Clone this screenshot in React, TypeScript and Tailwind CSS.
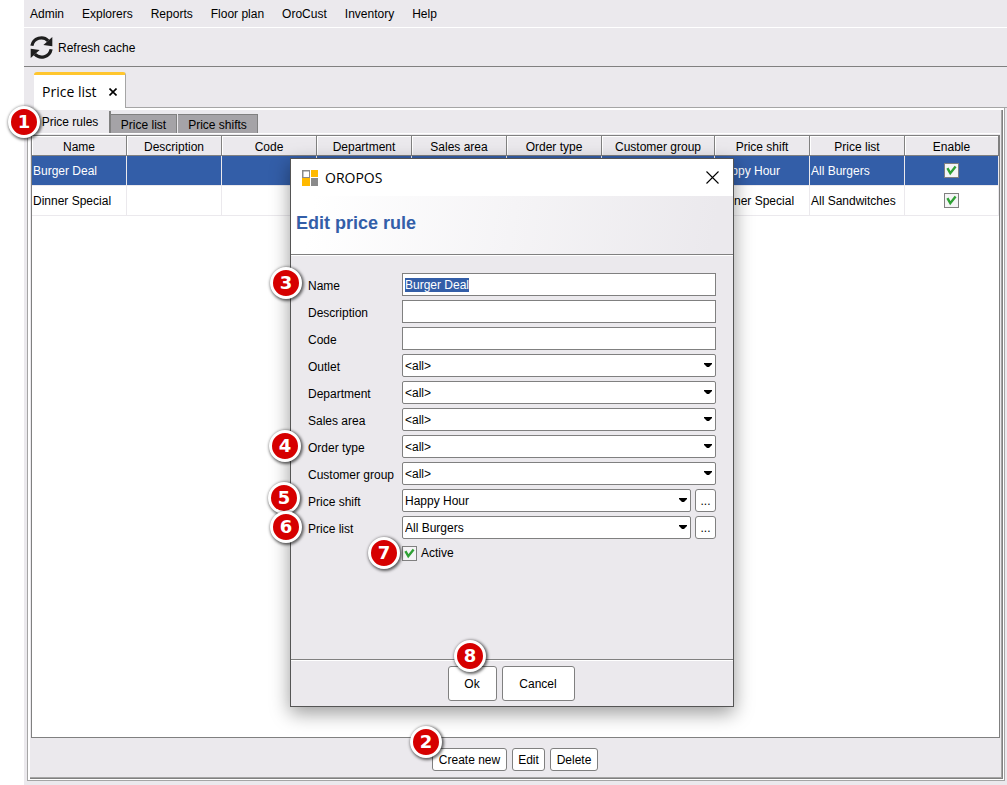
import React from 'react'
import clsx from 'clsx'

const menuItems = ['Admin', 'Explorers', 'Reports', 'Floor plan', 'OroCust', 'Inventory', 'Help']

const columns = [
  { title: 'Name', width: 'w-[95px]' },
  { title: 'Description', width: 'w-[95px]' },
  { title: 'Code', width: 'w-[95px]' },
  { title: 'Department', width: 'w-[95px]' },
  { title: 'Sales area', width: 'w-[95px]' },
  { title: 'Order type', width: 'w-[95px]' },
  { title: 'Customer group', width: 'w-[113px]' },
  { title: 'Price shift', width: 'w-[95px]' },
  { title: 'Price list', width: 'w-[95px]' },
  { title: 'Enable', width: '' },
]

const rules = [
  { name: 'Burger Deal', shift: 'Happy Hour', list: 'All Burgers', selected: true },
  { name: 'Dinner Special', shift: 'Dinner Special', list: 'All Sandwitches', selected: false },
]

const callouts = [
  { n: 1, place: 'left-[8px] top-[106px]' },
  { n: 2, place: 'left-[410px] top-[726px]' },
  { n: 3, place: 'left-[270px] top-[267px]' },
  { n: 4, place: 'left-[269px] top-[430px]' },
  { n: 5, place: 'left-[268px] top-[482px]' },
  { n: 6, place: 'left-[270px] top-[511px]' },
  { n: 7, place: 'left-[368px] top-[537px]' },
  { n: 8, place: 'left-[454px] top-[640px]' },
]

const RefreshIcon = () => (
  <svg width="23" height="23" viewBox="0 0 23 23" fill="none" aria-hidden="true">
    <path d="M1.9 9.8A9.6 9.6 0 0 1 18.2 4.8" stroke="#1e1e1e" strokeWidth="3.2" />
    <path d="M22.3 1V10.2L13.4 9Z" fill="#1e1e1e" />
    <path d="M21.1 13.2A9.6 9.6 0 0 1 4.8 18.2" stroke="#1e1e1e" strokeWidth="3.2" />
    <path d="M.7 22V12.8L9.6 14Z" fill="#1e1e1e" />
  </svg>
)

const LogoIcon = () => (
  <svg width="16" height="16" viewBox="0 0 16 16" aria-hidden="true">
    <rect x="0" y="0" width="8" height="8" fill="#8a8a8a" />
    <rect x="1.5" y="1.5" width="5.5" height="5.5" fill="#fff" />
    <rect x="9" y="0" width="7" height="7" fill="#ffb900" />
    <rect x="0" y="8" width="8" height="8" fill="#ffb900" />
    <rect x="9" y="8" width="7" height="8" fill="#8a8a8a" />
  </svg>
)

const CheckBox = ({ id, label }: { id?: string, label?: string }) => (
  <span className="relative mx-auto block h-[15px] w-[15px] shrink-0">
    <input
      id={id}
      type="checkbox"
      defaultChecked
      aria-label={label}
      className="peer block h-[15px] w-[15px] appearance-none border border-[#808080] bg-[#f5f4f6]"
    />
    <svg
      className="pointer-events-none absolute inset-0 hidden peer-checked:block"
      width="15"
      height="15"
      viewBox="0 0 15 15"
      fill="none"
      aria-hidden="true"
    >
      <path d="M3.4 5.2L6.3 10.2L11.6 3.6" stroke="#2fa135" strokeWidth="2.4" />
    </svg>
  </span>
)

const Button = ({ children, className }: { children: React.ReactNode, className: string }) => (
  <button
    type="button"
    className={clsx('rounded-[3px] border border-[#808080] bg-white text-center leading-4', className)}
  >
    {children}
  </button>
)

const SelectBox = ({ id, value }: { id: string, value: string }) => (
  <div className="relative min-w-0 flex-1">
    <select
      id={id}
      className="block h-[23px] w-full appearance-none rounded-[2px] border border-[#808080] bg-white pl-0.5 leading-4"
    >
      <option>{value}</option>
    </select>
    <svg
      className="pointer-events-none absolute right-1 top-[9px]"
      width="8"
      height="4"
      viewBox="0 0 8 4"
      aria-hidden="true"
    >
      <path d="M0 0H8V1L5 4H3L0 1Z" fill="#000" />
    </svg>
  </div>
)

const FieldRow = ({ id, label, children }: { id: string, label: string, children: React.ReactNode }) => (
  <div className="flex h-[23px] items-center">
    <label htmlFor={id} className="w-[94px] shrink-0 whitespace-nowrap pt-0.5">
      {label}
    </label>
    {children}
  </div>
)

const inputClass =
  'h-[23px] min-w-0 flex-1 border border-[#808080] bg-white px-0.5 leading-4 outline-none selection:bg-[#335ea8] selection:text-white'

const EditDialog = () => (
  <section
    role="dialog"
    aria-label="Edit price rule"
    className="absolute left-[290px] top-[158px] flex w-[444px] flex-col border border-[#555] bg-[#ebe9ed] shadow-[0_6px_18px_rgba(0,0,0,0.4)]"
  >
    <div className="flex h-[37px] items-center bg-white pl-[11px] pr-3.5">
      <LogoIcon />
      <span className="flex-1 pl-[7px] font-['Open_Sans',sans-serif] text-sm">OROPOS</span>
      <button type="button" aria-label="Close">
        <svg width="13" height="13" viewBox="0 0 13 13" fill="none" aria-hidden="true">
          <path d="M.5 .5L12.5 12.5M12.5 .5L.5 12.5" stroke="#000" strokeWidth="1.1" />
        </svg>
      </button>
    </div>
    <header className="flex h-[59px] items-center border-b border-[#808080] bg-[linear-gradient(100deg,#fff_5%,#ebe9ed_95%)] px-[5px] pb-1">
      <h1 className="text-lg font-bold text-[#335ea8]">Edit price rule</h1>
    </header>

    <form className="flex flex-col gap-1 border-t border-white px-[17px] pb-[98px] pt-[17px]">
      <FieldRow id="name" label="Name">
        <input
          id="name"
          type="text"
          defaultValue="Burger Deal"
          autoFocus
          onFocus={(e) => e.target.select()}
          className={inputClass}
        />
      </FieldRow>
      <FieldRow id="description" label="Description">
        <input id="description" type="text" className={inputClass} />
      </FieldRow>
      <FieldRow id="code" label="Code">
        <input id="code" type="text" className={inputClass} />
      </FieldRow>
      <FieldRow id="outlet" label="Outlet">
        <SelectBox id="outlet" value="<all>" />
      </FieldRow>
      <FieldRow id="department" label="Department">
        <SelectBox id="department" value="<all>" />
      </FieldRow>
      <FieldRow id="salesArea" label="Sales area">
        <SelectBox id="salesArea" value="<all>" />
      </FieldRow>
      <FieldRow id="orderType" label="Order type">
        <SelectBox id="orderType" value="<all>" />
      </FieldRow>
      <FieldRow id="customerGroup" label="Customer group">
        <SelectBox id="customerGroup" value="<all>" />
      </FieldRow>
      <FieldRow id="priceShift" label="Price shift">
        <SelectBox id="priceShift" value="Happy Hour" />
        <Button className="ml-1 h-[23px] w-[21px]">...</Button>
      </FieldRow>
      <FieldRow id="priceList" label="Price list">
        <SelectBox id="priceList" value="All Burgers" />
        <Button className="ml-1 h-[23px] w-[21px]">...</Button>
      </FieldRow>
      <div className="flex items-center pl-[94px] pt-0.5">
        <div>
          <CheckBox id="active" />
        </div>
        <label htmlFor="active" className="pl-1">
          Active
        </label>
      </div>
    </form>

    <footer className="flex justify-center gap-[5px] border-t border-[#808080] pb-[5px] pr-0.5 pt-1.5 shadow-[inset_0_1px_0_#fff]">
      <Button className="h-[35px] w-[49px]">Ok</Button>
      <Button className="h-[35px] w-[73px]">Cancel</Button>
    </footer>
  </section>
)

const RulesTable = () => (
  <table className="w-full table-fixed border-separate border-spacing-0">
    <thead>
      <tr className="h-5">
        {columns.map(({ title, width }) => (
          <th
            key={title}
            className={clsx(
              'h-5 overflow-hidden whitespace-nowrap border-b border-r border-[#808080] bg-[#ebe9ed] p-0 pt-0.5 font-normal shadow-[inset_1px_1px_0_#fff]',
              width,
            )}
          >
            {title}
          </th>
        ))}
      </tr>
    </thead>
    <tbody>
      {rules.map(({ name, shift, list, selected }) => (
        <tr key={name} className={clsx('h-[30px]', selected ? 'bg-[#335ea8] text-white' : 'bg-white')}>
          {[name, '', '', '', '', '', '', shift, list].map((text, i) => (
            <td key={i} className="overflow-hidden whitespace-nowrap border-b border-r border-[#ebe9ed] px-px py-0">
              {text}
            </td>
          ))}
          <td className="border-b border-r border-[#ebe9ed] p-0">
            <CheckBox label={`Enable ${name}`} />
          </td>
        </tr>
      ))}
    </tbody>
  </table>
)

const App = () => (
  <div className="relative flex min-h-screen bg-white pl-6 font-['Liberation_Sans',Arial,sans-serif] text-xs leading-4 text-black">
    <div className="flex min-w-0 flex-1 flex-col bg-[#ebe9ed] pb-1">
      {/* Menu */}
      <nav className="flex h-7 items-center gap-[17px] border-b border-white pl-1.5">
        {menuItems.map((item) => (
          <button key={item} type="button" className="pr-px">
            {item}
          </button>
        ))}
      </nav>

      {/* Toolbar */}
      <div className="flex h-[39px] items-center border-b border-[#808080] pl-1.5 pt-px">
        <button type="button" className="flex items-center gap-[5px]">
          <RefreshIcon />
          Refresh cache
        </button>
      </div>

      {/* Document tabs */}
      <div className="flex h-[41px] items-end">
        <div className="w-2.5" />
        <div className="flex h-9 w-[92px] items-center justify-between rounded-t-[3px] border-r border-t-[3px] border-r-[#a5a5a5] border-t-[#ffc62e] bg-white px-2">
          <span className="font-['Open_Sans',sans-serif] text-sm">Price list</span>
          <button type="button" aria-label="Close tab">
            <svg width="8" height="8" viewBox="0 0 8 8" fill="none" aria-hidden="true">
              <path d="M.5 .5L7.5 7.5M7.5 .5L.5 7.5" stroke="#000" strokeWidth="1.6" />
            </svg>
          </button>
        </div>
        <div className="h-full flex-1 border-b border-[#a5a5a5]" />
      </div>

      <main className="ml-[3px] mr-0.5 flex flex-1 border-x border-b border-[#a5a5a5] bg-white pb-px pl-0.5 pr-px pt-0.5">
        <div className="flex min-w-0 flex-1 flex-col border-b border-r border-[#808080] bg-[#ebe9ed] pb-px pl-px pr-0.5 shadow-[inset_-1px_-1px_0_#a5a5a5]">
          {/* View tabs */}
          <div className="flex h-6 shrink-0 items-end border-b border-white">
            <button type="button" className="h-[22px] w-20 border-r-2 border-[#808080] pb-px text-center">
              Price rules
            </button>
            <button
              type="button"
              className="mr-px h-[19px] w-[66px] border-r border-t border-[#808080] bg-[#a5a3a7] pt-px text-center"
            >
              Price list
            </button>
            <button
              type="button"
              className="h-[19px] w-20 border-r border-t border-[#808080] bg-[#a5a3a7] pt-px text-center"
            >
              Price shifts
            </button>
          </div>

          <div className="mt-px flex-1 border border-[#808080] bg-white">
            <RulesTable />
          </div>

          <div className="flex justify-center gap-[5px] pb-1.5 pr-px pt-2.5">
            <Button className="h-[23px] w-[75px]">Create new</Button>
            <Button className="h-[23px] w-[33px]">Edit</Button>
            <Button className="h-[23px] w-12">Delete</Button>
          </div>
        </div>
      </main>
    </div>

    <EditDialog />

    {/* Step markers */}
    {callouts.map(({ n, place }) => (
      <span
        key={n}
        className={clsx(
          "absolute flex h-8 w-8 items-center justify-center rounded-full border-[3px] border-white bg-[#d60000] font-['DejaVu_Sans',sans-serif] text-lg font-bold text-white shadow-[1px_1px_3px_1px_rgba(0,0,0,0.6)]",
          place,
        )}
      >
        {n}
      </span>
    ))}
  </div>
)

export default App
